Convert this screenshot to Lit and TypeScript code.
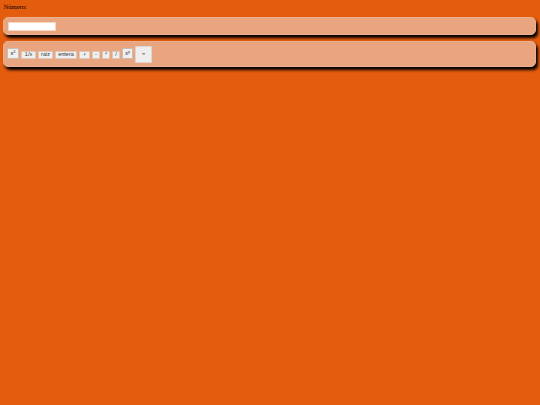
import { LitElement, html, css } from "lit";
import { customElement } from "lit/decorators.js";

@customElement("app-root")
export class AppRoot extends LitElement {
  static styles = css`
    :host {
      display: block;
      min-height: 405px;
      background: #e45c0e;
      font-family: "Liberation Serif", serif;
      color: #000;
      overflow: hidden;
      text-rendering: geometricPrecision;
    }
    .label { font-size: 6.6px; line-height: 8px; padding: 4px 0 0 3.5px; height: 14px; box-sizing: border-box; }
    .panel {
      margin: 3px 4px 6px 3px;
      border-radius: 5px;
      background: #e9a57f;
      border: 1px solid #edb191;
      box-shadow: 2px 3px 3px #000;
      box-sizing: border-box;
      display: flex;
    }
    .p1 { height: 18px; padding: 4px; align-items: center; }
    .p2 { height: 26px; gap: 2px; padding: 4px 3px; align-items: flex-start; }
    input {
      width: 46px; height: 7px; border: 0; padding: 0; margin: 0 0 0 1px;
      background: #fff; display: block; outline: 1px solid #f5d6c4;
    }
    button {
      font-family: "Liberation Sans", sans-serif;
      text-rendering: geometricPrecision;
      font-size: 5.5px;
      line-height: 6px;
      height: 8px;
      margin: 5px 0 0;
      padding: 0;
      background: #efefef;
      border: 1px solid #dcc9bc;
      border-radius: 1px;
      color: #333;
      box-sizing: border-box;
      overflow: visible;
    }
    .tall { height: 11px; margin-top: 2px; border-color: #c9bdb4; color: #111; }
    .big { height: 17px; margin-top: 0; background: #eeeeee; border-color: #dfd5ce; }
    .w8 { width: 8px; }
    .w11 { width: 11px; }
    .w12 { width: 12px; }
    .w15 { width: 15px; }
    .w17 { width: 17px; }
    .w22 { width: 22px; }
    sup { font-size: 4px; line-height: 0; vertical-align: 2px; }
  `;
  render() {
    return html`
      <div class="label">Número:</div>
      <div class="panel p1"><input type="text" aria-label="Número" /></div>
      <div class="panel p2">
        <button class="tall w12">x<sup>2</sup></button>
        <button class="w15">1/x</button>
        <button class="w15">raiz</button>
        <button class="w22">entera</button>
        <button class="w11">+</button>
        <button class="w8">-</button>
        <button class="w8">*</button>
        <button class="w8">/</button>
        <button class="tall w11">x<sup>y</sup></button>
        <button class="big w17">=</button>
      </div>
    `;
  }
}
